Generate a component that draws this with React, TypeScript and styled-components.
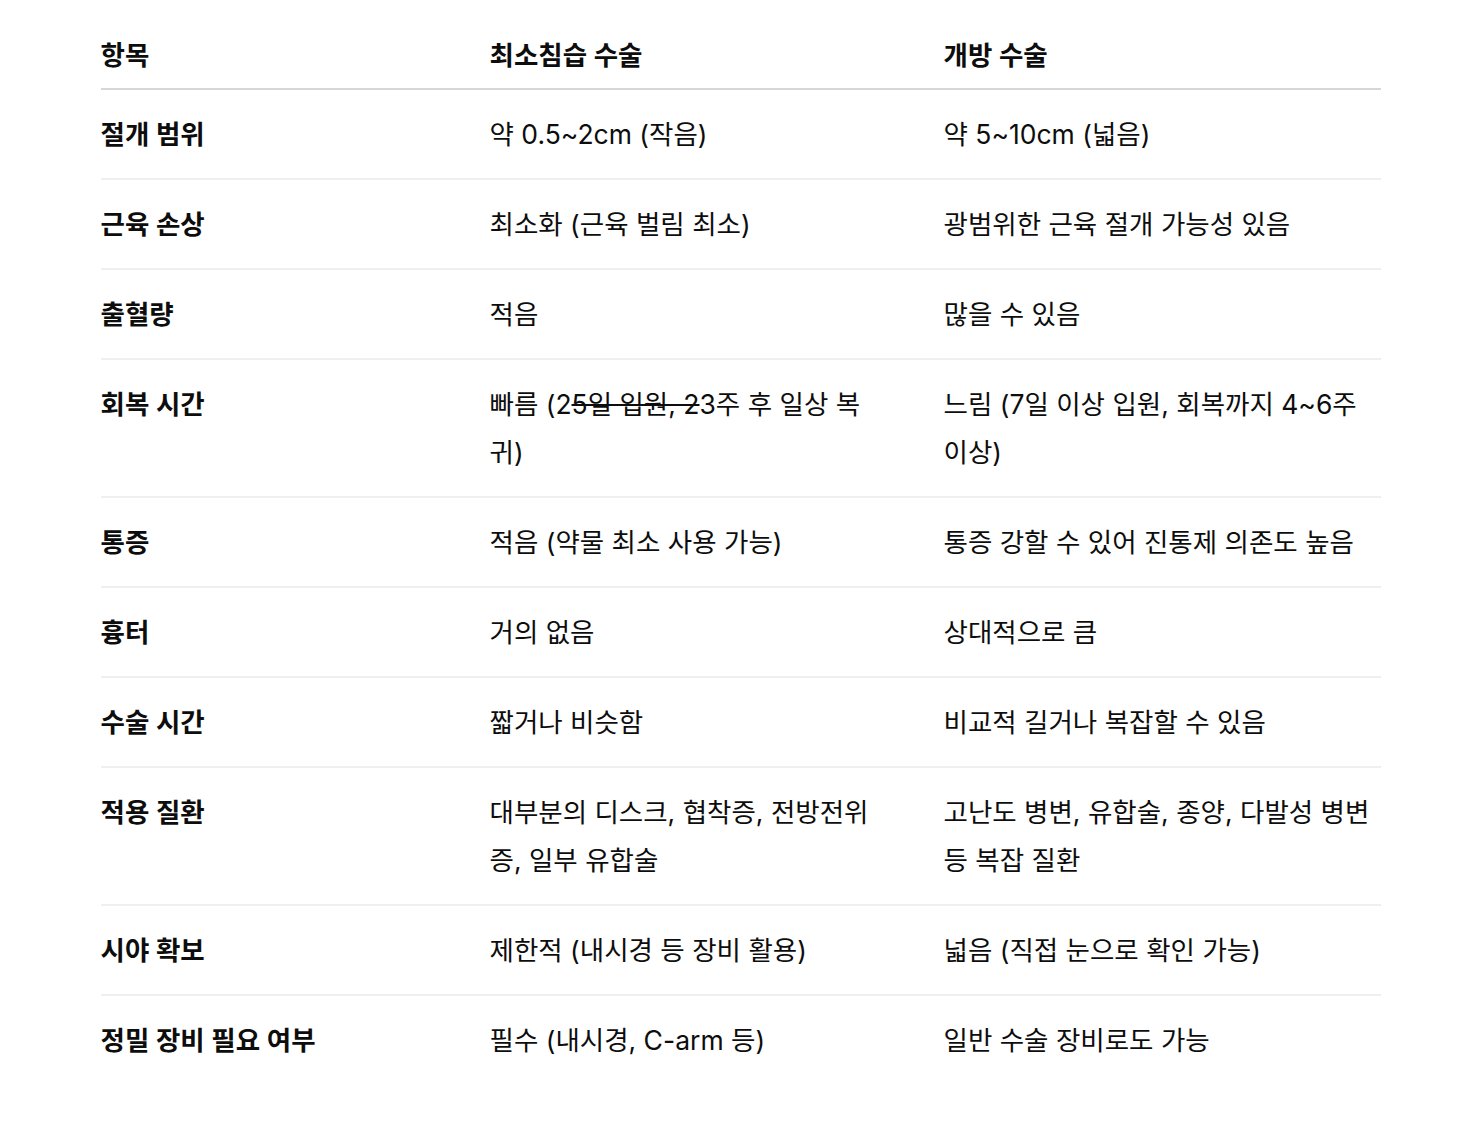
import styled, { createGlobalStyle } from "styled-components";

const GlobalStyle = createGlobalStyle`
html, body {
  margin: 0;
  padding: 0;
  background: #ffffff;
}
body {
  font-family: Inter, "Noto Sans CJK KR", "Noto Sans", sans-serif;
  color: #0d0d0d;
}
`;

const Page = styled.div`
padding: 31px 0 60px;
display: flex;
justify-content: center;
`;

const Table = styled.table`
width: 1280px;
table-layout: fixed;
border-collapse: collapse;
font-size: 26.5px;
line-height: 48px;
`;

const HeadCell = styled.th`
text-align: left;
font-weight: 600;
padding: 0 30px 9px;
border-bottom: 2px solid #d6d6d6;
&:first-child { padding-left: 0; }
&:last-child { padding-right: 0; }
`;

const Row = styled.tr`
border-bottom: 2px solid #efefef;
&:last-child { border-bottom: none; }
`;

const Cell = styled.td<{ strong?: boolean }>`
vertical-align: top;
padding: 20px 30px;
font-weight: ${(p) => (p.strong ? 600 : 400)};
&:first-child { padding-left: 0; }
&:last-child { padding-right: 0; }
`;

const Strike = styled.del`
text-decoration: line-through;
`;

type Item = { label: string; mini: React.ReactNode; open: string };

const rows: Item[] = [
  { label: "절개 범위", mini: "약 0.5~2cm (작음)", open: "약 5~10cm (넓음)" },
  { label: "근육 손상", mini: "최소화 (근육 벌림 최소)", open: "광범위한 근육 절개 가능성 있음" },
  { label: "출혈량", mini: "적음", open: "많을 수 있음" },
  {
    label: "회복 시간",
    mini: (
      <>
        빠름 (2<Strike>5일 입원, 2</Strike>3주 후 일상 복귀)
      </>
    ),
    open: "느림 (7일 이상 입원, 회복까지 4~6주 이상)",
  },
  { label: "통증", mini: "적음 (약물 최소 사용 가능)", open: "통증 강할 수 있어 진통제 의존도 높음" },
  { label: "흉터", mini: "거의 없음", open: "상대적으로 큼" },
  { label: "수술 시간", mini: "짧거나 비슷함", open: "비교적 길거나 복잡할 수 있음" },
  {
    label: "적용 질환",
    mini: "대부분의 디스크, 협착증, 전방전위증, 일부 유합술",
    open: "고난도 병변, 유합술, 종양, 다발성 병변 등 복잡 질환",
  },
  { label: "시야 확보", mini: "제한적 (내시경 등 장비 활용)", open: "넓음 (직접 눈으로 확인 가능)" },
  { label: "정밀 장비 필요 여부", mini: "필수 (내시경, C-arm 등)", open: "일반 수술 장비로도 가능" },
];

export default function App() {
  return (
    <Page>
      <GlobalStyle />
      <Table>
        <colgroup>
          <col style={{ width: 359 }} />
          <col style={{ width: 454 }} />
          <col style={{ width: 467 }} />
        </colgroup>
        <thead>
          <tr>
            <HeadCell>항목</HeadCell>
            <HeadCell>최소침습 수술</HeadCell>
            <HeadCell>개방 수술</HeadCell>
          </tr>
        </thead>
        <tbody>
          {rows.map((r) => (
            <Row key={r.label}>
              <Cell strong>{r.label}</Cell>
              <Cell>{r.mini}</Cell>
              <Cell>{r.open}</Cell>
            </Row>
          ))}
        </tbody>
      </Table>
    </Page>
  );
}
